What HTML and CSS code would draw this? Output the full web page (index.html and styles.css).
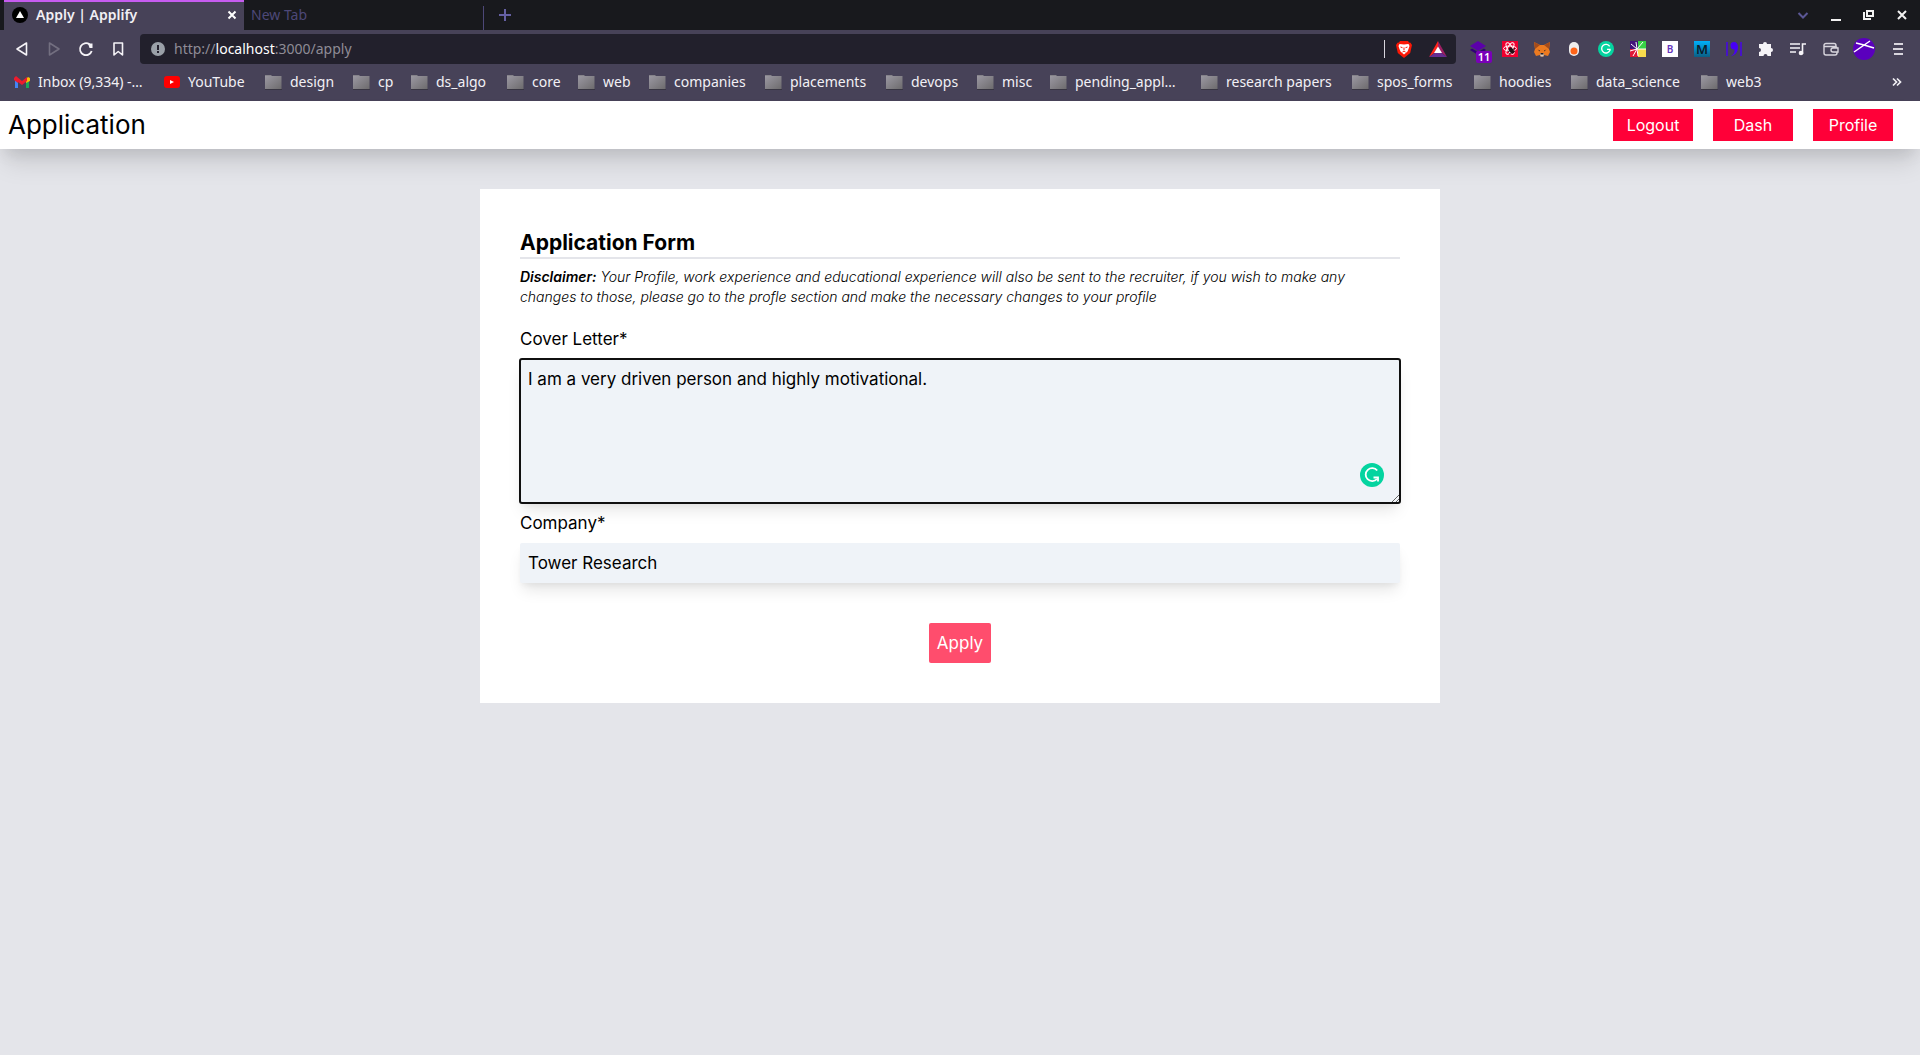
FILE: index.html
```html
<!DOCTYPE html>
<html lang="en">
<head>
<meta charset="utf-8">
<title>Apply | Applify</title>
<link rel="stylesheet" href="styles.css">
</head>
<body>
<svg class="defs" width="0" height="0" aria-hidden="true">
  <defs>
    <linearGradient id="folder-fill" x1="0" y1="0" x2="1" y2="1"><stop offset="0" stop-color="#9b98a2"/><stop offset="1" stop-color="#6d6b6d"/></linearGradient>
    <symbol id="folder" viewBox="0 0 18 16"><path d="M1 2V1h6l1 1v1H1z" fill="#85838a"/><path d="M1 2h16.500v13H1z" fill="url(#folder-fill)"/><path d="M1 15.500h17" stroke="#383542"/></symbol>
  </defs>
</svg>

<div class="browser">
  <div class="tabstrip">
    <div class="tab tab-active">
      <svg width="16" height="16" viewBox="0 0 16 16"><circle cx="8" cy="8" r="8" fill="#000"/><path d="M8 4l4 7H4z" fill="#fff"/></svg>
      <span class="tab-title">Apply | Applify</span>
      <button class="icon-btn tab-close" aria-label="Close tab"><svg width="10" height="10" viewBox="0 0 10 10"><path d="M1.500 1.500l7 7M8.500 1.500l-7 7" stroke="#fff" stroke-width="2"/></svg></button>
    </div>
    <div class="tab tab-idle">New Tab</div>
    <button class="icon-btn new-tab" aria-label="New tab"><svg width="12" height="12" viewBox="0 0 12 12"><path d="M6 0v12M0 6h12" stroke="#6560a3" stroke-width="2"/></svg></button>
    <div class="window-controls">
      <button class="icon-btn" aria-label="Search tabs"><svg width="12" height="12" viewBox="0 0 12 12"><path d="M1.500 4L6 8.500 10.500 4" fill="none" stroke="#5b5795" stroke-width="2"/></svg></button>
      <button class="icon-btn" aria-label="Minimize"><svg width="12" height="12" viewBox="0 0 12 12"><path d="M1 11h10" stroke="#f2f2f2" stroke-width="2"/></svg></button>
      <button class="icon-btn" aria-label="Restore"><svg width="12" height="12" viewBox="0 0 12 12"><path d="M4 2h6v5H4zM1 3v7h7" fill="none" stroke="#f2f2f2" stroke-width="2"/></svg></button>
      <button class="icon-btn" aria-label="Close window"><svg width="12" height="12" viewBox="0 0 12 12"><path d="M2 2l8 8M10 2l-8 8" stroke="#f2f2f2" stroke-width="2"/></svg></button>
    </div>
  </div>

  <div class="toolbar">
    <div class="nav-buttons">
      <button class="icon-btn" aria-label="Back"><svg width="16" height="16" viewBox="0 0 16 16"><path d="M12.500 2v12L3 8z" fill="none" stroke="#f5f3f7" stroke-width="1.600" stroke-linejoin="round"/></svg></button>
      <button class="icon-btn" aria-label="Forward"><svg width="16" height="16" viewBox="0 0 16 16"><path d="M3.500 2v12L13 8z" fill="none" stroke="#736f80" stroke-width="1.600" stroke-linejoin="round"/></svg></button>
      <button class="icon-btn" aria-label="Reload"><svg width="16" height="16" viewBox="0 0 16 16"><path d="M11.500 3.300A6 6 0 1 0 13.700 10" fill="none" stroke="#f5f3f7" stroke-width="1.800"/><path d="M10 2.500h4.500v4.500h-3z" fill="#f5f3f7"/></svg></button>
      <button class="icon-btn" aria-label="Bookmark"><svg width="16" height="16" viewBox="0 0 16 16"><path d="M4 2h8.500v12L8.200 10.500 4 14z" fill="none" stroke="#f5f3f7" stroke-width="1.600" stroke-linejoin="round"/></svg></button>
    </div>
    <div class="address-bar">
      <svg width="14" height="14" viewBox="0 0 14 14"><circle cx="7" cy="7" r="7" fill="#9aa0a8"/><path d="M7 3v5M7 9v2" stroke="#24212f" stroke-width="2"/></svg>
      <div class="address" role="textbox" aria-label="Address" contenteditable="true" spellcheck="false">http://<span class="host">localhost</span>:3000/apply</div>
      <button class="icon-btn shield" aria-label="Shields"><svg width="16" height="18" viewBox="0 0 16 18"><path d="M4 1h8l1 1.500 1.500.3L16 5l-1.800 8L8 18l-6.200-5L0 5l1.500-2.200L3 2.500z" fill="#fb1806"/><path d="M3.500 4l4.500.5 4.500-.5 1 2-1 3-1 2.500L8 14.500 4.500 11.500l-1-2.500-1-3z" fill="#fff"/><path d="M4.500 7l2 .7M11.500 7l-2 .7M8 7.500V10M6.500 12L8 11l1.500 1" stroke="#fb1806" stroke-width="1" fill="none"/></svg></button>
      <button class="icon-btn" aria-label="Rewards"><svg width="18" height="16" viewBox="0 0 18 16"><path d="M9 0v6l-3.500 6L0 16z" fill="#ff231a"/><path d="M9 0v6l3.500 6L18 16z" fill="#9e1f63"/><path d="M0 16l5.500-4h7l5.500 4z" fill="#662d91"/><path d="M9 5.500l4 6.500H5z" fill="#fff"/></svg></button>
    </div>
    <div class="extensions">
      <button class="icon-btn ext" aria-label="Layers"><svg width="16" height="16" viewBox="0 0 16 16"><path d="M8 0l8 5-8 5-8-5z" fill="#5b00aa"/><path d="M2 7.500L0 9l8 5 8-5-2-1.500L8 11z" fill="#320078"/></svg><span class="badge">11</span></button>
      <button class="icon-btn ext" aria-label="React tools"><svg width="16" height="16" viewBox="0 0 16 16"><path d="M0 0h16v16H0z" fill="#f0002f"/><g fill="none" stroke="#fff"><ellipse cx="8" cy="7.500" rx="6.500" ry="2.500"/><ellipse cx="8" cy="7.500" rx="6.500" ry="2.500" transform="rotate(60 8 7.500)"/><ellipse cx="8" cy="7.500" rx="6.500" ry="2.500" transform="rotate(120 8 7.500)"/></g><ellipse cx="9.500" cy="9.500" rx="2" ry="3.500" fill="#221016" transform="rotate(-35 9.500 9.500)"/><path d="M6 10.500l7-3M7 13l6-3" stroke="#221016"/></svg></button>
      <button class="icon-btn ext" aria-label="Wallet fox"><svg width="16" height="16" viewBox="0 0 16 16"><path d="M0 1l6 3h4l6-3-1 7 1 3-2 4-4-1-1 1.500H7L6 14l-4 1-2-4 1-3z" fill="#ec7a20"/><path d="M0 1l6 3-5 4zM16 1l-6 3 5 4z" fill="#a44b1b"/><path d="M6 12h4l-.5 3.500h-3z" fill="#d9cabc"/><path d="M3.500 8.500l2.500 1v1zM12.500 8.500l-2.500 1v1zM6.500 12h3v1.500h-3z" fill="#252027"/></svg></button>
      <button class="icon-btn ext" aria-label="Toggle"><svg width="16" height="16" viewBox="0 0 16 16"><rect x="3" y="1" width="10" height="14" rx="5" fill="#efeeee"/><circle cx="8" cy="10" r="3.500" fill="#ff6419"/></svg></button>
      <button class="icon-btn ext" aria-label="Grammar checker"><svg width="16" height="16" viewBox="0 0 24 24"><circle cx="12" cy="12" r="12" fill="#04d4a0"/><path d="M17.500 8A6.500 6.500 0 1 0 18 14v-1.500h-4.500" fill="none" stroke="#fff" stroke-width="2"/></svg></button>
      <button class="icon-btn ext" aria-label="Color burst"><svg width="16" height="16" viewBox="0 0 16 16"><path d="M0 0h8v8H0z" fill="#43147a"/><path d="M8 0h8v8H8z" fill="#38d245"/><path d="M0 8h8v8H0z" fill="#df1837"/><path d="M8 8h8v8H8z" fill="#f8db4c"/><path d="M7 8L1 3M7 8l-7 2M7 8L6 1M7 8l-4 7M7 8l1 7M7 8l6-7M7 8l9 0" stroke="#fff"/></svg></button>
      <button class="icon-btn ext" aria-label="B tools"><span class="letter letter-b">B</span></button>
      <button class="icon-btn ext" aria-label="M tools"><span class="letter letter-m">M</span></button>
      <button class="icon-btn ext" aria-label="Quote"><svg width="16" height="16" viewBox="0 0 16 16"><path d="M1 1v14M15 1v14" stroke="#4700f5" stroke-width="1.400"/><path d="M8 1a3.500 3.500 0 1 0 .5 7.500C9 12 7 14 5 15c4-.5 7-4 7-9 0-3-1.500-5-4-5z" fill="#4700f5"/></svg></button>
      <button class="icon-btn ext" aria-label="Extensions"><svg width="16" height="16" viewBox="0 0 16 16"><path d="M1 3h4a2 2 0 1 1 4 0h4v4a2 2 0 1 1 0 4v4H9.500a2 2 0 0 0-4 0H1v-4a2 2 0 0 0 0-4z" fill="#f5f3f7"/></svg></button>
      <button class="icon-btn ext" aria-label="Media"><svg width="16" height="16" viewBox="0 0 16 16"><path d="M0 3h10M0 7h10M0 11h6M12.500 13V3H16" fill="none" stroke="#f5f3f7" stroke-width="1.600"/><circle cx="11" cy="12" r="2.300" fill="#f5f3f7"/></svg></button>
      <button class="icon-btn ext" aria-label="Wallet"><svg width="16" height="16" viewBox="0 0 16 16"><path d="M1 4v8a2 2 0 0 0 2 2h9a2 2 0 0 0 2-2v-1M1 4.500a2 2 0 0 1 2-2h8a2 2 0 0 1 2 2v1M1.500 5.500H12a2 2 0 0 1 2 2M15 11h-5a2 2 0 1 1 0-4h5z" fill="none" stroke="#d8d5dd" stroke-width="1.400"/></svg></button>
      <button class="icon-btn ext" aria-label="Account"><svg width="22" height="22" viewBox="0 0 22 22"><circle cx="11" cy="11" r="11" fill="#5a00bd"/><path d="M1 14L17 3M3 5l8 2 10 3" stroke="#fff" stroke-width="1.500" fill="none"/></svg></button>
      <button class="icon-btn ext" aria-label="Menu"><svg width="16" height="16" viewBox="0 0 16 16"><path d="M4 3h9M3 8h10M4 13h9" stroke="#d8d5dd" stroke-width="2"/></svg></button>
    </div>
  </div>

  <nav class="bookmarks" aria-label="Bookmarks">
    <a href="#"><svg width="16" height="12" viewBox="0 0 16 12"><path d="M1 3v9h3V4z" fill="#4285f4"/><path d="M15 3v9h-3V4z" fill="#18a858"/><path d="M12 3l2-2 2 1v3l-4 2z" fill="#fbbc04"/><path d="M0 2l2-2 6 5 5-4v4L8 9 4 6v1L0 4z" fill="#ed1b2d"/></svg>Inbox (9,334) -…</a>
    <a href="#"><svg width="16" height="12" viewBox="0 0 16 12"><rect width="16" height="12" rx="3" fill="#f00"/><path d="M6 4l4 2-4 2z" fill="#fff"/></svg>YouTube</a>
    <a href="#"><svg width="18" height="16"><use href="#folder"/></svg>design</a>
    <a href="#"><svg width="18" height="16"><use href="#folder"/></svg>cp</a>
    <a href="#"><svg width="18" height="16"><use href="#folder"/></svg>ds_algo</a>
    <a href="#"><svg width="18" height="16"><use href="#folder"/></svg>core</a>
    <a href="#"><svg width="18" height="16"><use href="#folder"/></svg>web</a>
    <a href="#"><svg width="18" height="16"><use href="#folder"/></svg>companies</a>
    <a href="#"><svg width="18" height="16"><use href="#folder"/></svg>placements</a>
    <a href="#"><svg width="18" height="16"><use href="#folder"/></svg>devops</a>
    <a href="#"><svg width="18" height="16"><use href="#folder"/></svg>misc</a>
    <a href="#"><svg width="18" height="16"><use href="#folder"/></svg>pending_appl…</a>
    <a href="#"><svg width="18" height="16"><use href="#folder"/></svg>research papers</a>
    <a href="#"><svg width="18" height="16"><use href="#folder"/></svg>spos_forms</a>
    <a href="#"><svg width="18" height="16"><use href="#folder"/></svg>hoodies</a>
    <a href="#"><svg width="18" height="16"><use href="#folder"/></svg>data_science</a>
    <a href="#"><svg width="18" height="16"><use href="#folder"/></svg>web3</a>
    <button class="icon-btn more" aria-label="More bookmarks"><svg width="10" height="10" viewBox="0 0 10 10"><path d="M1 1.500L4.500 5 1 8.500M5 1.500L8.500 5 5 8.500" fill="none" stroke="#f2f0f5" stroke-width="1.700"/></svg></button>
  </nav>
</div>

<header class="site-header">
  <h1 class="site-title">Application</h1>
  <div class="site-nav">
    <button class="nav-btn">Logout</button>
    <button class="nav-btn">Dash</button>
    <button class="nav-btn">Profile</button>
  </div>
</header>

<main class="page">
  <form class="card">
    <h2 class="card-title">Application Form</h2>
    <p class="disclaimer"><strong>Disclaimer:</strong> Your Profile, work experience and educational experience will also be sent to the recruiter, if you wish to make any changes to those, please go to the profle section and make the necessary changes to your profile</p>
    <label class="label" for="cover">Cover Letter*</label>
    <div class="cover-wrap">
      <textarea class="field cover" id="cover" spellcheck="false">I am a very driven person and highly motivational.</textarea>
      <svg class="grammar-badge" width="24" height="24" viewBox="0 0 24 24" aria-hidden="true"><circle cx="12" cy="12" r="12" fill="#04d4a0"/><path d="M17.200 7.500A6.500 6.500 0 1 0 17 16" fill="none" stroke="#fff" stroke-width="1.800"/><path d="M13.500 14.500h4.500v4" fill="none" stroke="#fff" stroke-width="1.800"/></svg>
    </div>
    <label class="label" for="company">Company*</label>
    <input class="field company" id="company" type="text" value="Tower Research">
    <button class="apply-btn" type="button">Apply</button>
  </form>
</main>
</body>
</html>
```
FILE: styles.css
```css
* { box-sizing: border-box; }

body {
  margin: 0;
  min-height: 100vh;
  background: #e4e5ea;
  color: #000;
  font: 17px/24px Inter, "Open Sans", sans-serif;
}

button, input, textarea { font: inherit; }
svg { display: block; flex: none; }
.defs { position: absolute; }

/* Browser window */
.browser {
  background: #474258;
  color: #f2f0f5;
  font-family: "Noto Sans", "Open Sans", sans-serif;
  font-size: 14px;
}

.icon-btn {
  display: flex;
  align-items: center;
  justify-content: center;
  padding: 0;
  border: 0;
  background: none;
  color: inherit;
}

.tabstrip {
  display: flex;
  height: 30px;
  padding-left: 4px;
  background: #18191d;
}

.tab { display: flex; align-items: center; width: 240px; }
.tab-active {
  gap: 8px;
  padding: 0 7px 2px 8px;
  border-top: 2px solid #c65cf0;
  background: #474258;
  font-weight: 600;
}
.tab-close { margin-left: auto; }
.tab-idle {
  padding-left: 7px;
  background: linear-gradient(#4d4878, #4d4878) right bottom / 1px 24px no-repeat;
  color: #4d4878;
}
.new-tab { width: 42px; }
.window-controls { display: flex; margin-left: auto; padding-right: 2px; }
.window-controls .icon-btn { width: 33px; }

.toolbar { display: flex; align-items: center; height: 36px; padding: 2px 6px 0; }
.nav-buttons { display: flex; padding-right: 6px; }
.nav-buttons .icon-btn { width: 32px; height: 30px; }

.address-bar {
  display: flex;
  flex: 1;
  align-items: center;
  gap: 9px;
  height: 30px;
  padding: 0 9px 0 11px;
  border-radius: 4px;
  background: #22202c;
}
.address { flex: 1; color: #8f8c96; outline: 0; }
.host { color: #fff; }
.shield {
  height: 18px;
  padding: 0 8px 0 11px;
  border-left: 1px solid #d8d5dd;
}

.extensions { display: flex; padding-left: 6px; }
.ext { position: relative; width: 32px; height: 30px; }
.ext:nth-last-child(-n+3) { width: 33px; }
.ext:nth-last-child(2) { width: 34px; }
.badge {
  position: absolute;
  right: 2px;
  bottom: 1px;
  width: 16px;
  border-radius: 2px;
  background: #7900b8;
  color: #fff;
  font-size: 11px;
  font-weight: 600;
  line-height: 12px;
}
.letter { width: 16px; font-weight: 600; line-height: 16px; }
.letter-b { background: #fff; color: #6633bb; font-size: 10px; }
.letter-m { background: linear-gradient(#00b0fa, #0a5f85); color: #0b1c2b; font-size: 13px; }

.bookmarks {
  display: grid;
  grid-template-columns: 150px 100px 88px 58px 96px 71px 71px 116px 121px 91px 73px 151px 151px 122px 97px 130px 1fr 32px;
  align-items: center;
  height: 35px;
  padding: 0 7px 3px 14px;
}
.bookmarks a {
  display: flex;
  align-items: center;
  gap: 8px;
  color: inherit;
  text-decoration: none;
  white-space: nowrap;
}

/* Site header */
.site-header {
  display: flex;
  align-items: center;
  justify-content: space-between;
  height: 48px;
  padding: 0 27px 0 8px;
  background: #fff;
  box-shadow: 0 20px 25px -5px rgba(0, 0, 0, .1), 0 8px 16px -4px rgba(0, 0, 0, .1);
}
.site-title { margin: 0; font-size: 26px; font-weight: 400; line-height: 32px; }
.site-nav { display: flex; gap: 20px; }
.nav-btn {
  width: 80px;
  height: 32px;
  padding: 0;
  border: 0;
  background: #ff0038;
  color: #fff;
  font-size: 16px;
}

/* Application form */
.page { padding: 40px 16px; }
.card {
  display: flex;
  flex-direction: column;
  max-width: 960px;
  margin: 0 auto;
  padding: 40px;
  background: #fff;
}
.card-title {
  margin: 0;
  border-bottom: 2px solid #e4e5ea;
  font-size: 21px;
  font-weight: 700;
  line-height: 28px;
}
.disclaimer {
  margin: 8px 0 20px;
  font-size: 14px;
  font-style: italic;
  font-weight: 300;
  line-height: 20px;
}
.disclaimer strong { font-weight: 600; }
.label { margin-bottom: 8px; }
.field {
  display: block;
  width: 100%;
  padding: 8px;
  border: 0;
  border-radius: 2px;
  background: #eff3f8;
  box-shadow: 0 10px 15px -3px rgba(0, 0, 0, .1), 0 4px 6px -2px rgba(0, 0, 0, .05);
  color: #000;
}
.cover-wrap { position: relative; margin-bottom: 8px; }
.cover {
  height: 144px;
  outline: 2px solid #101010;
  outline-offset: -1px;
}
.grammar-badge { position: absolute; right: 16px; bottom: 16px; }
.company { height: 40px; margin-bottom: 40px; }
.apply-btn {
  align-self: center;
  width: 62px;
  height: 40px;
  padding: 0;
  border: 0;
  border-radius: 2px;
  background: #ff4d6d;
  color: #fff;
}
```
